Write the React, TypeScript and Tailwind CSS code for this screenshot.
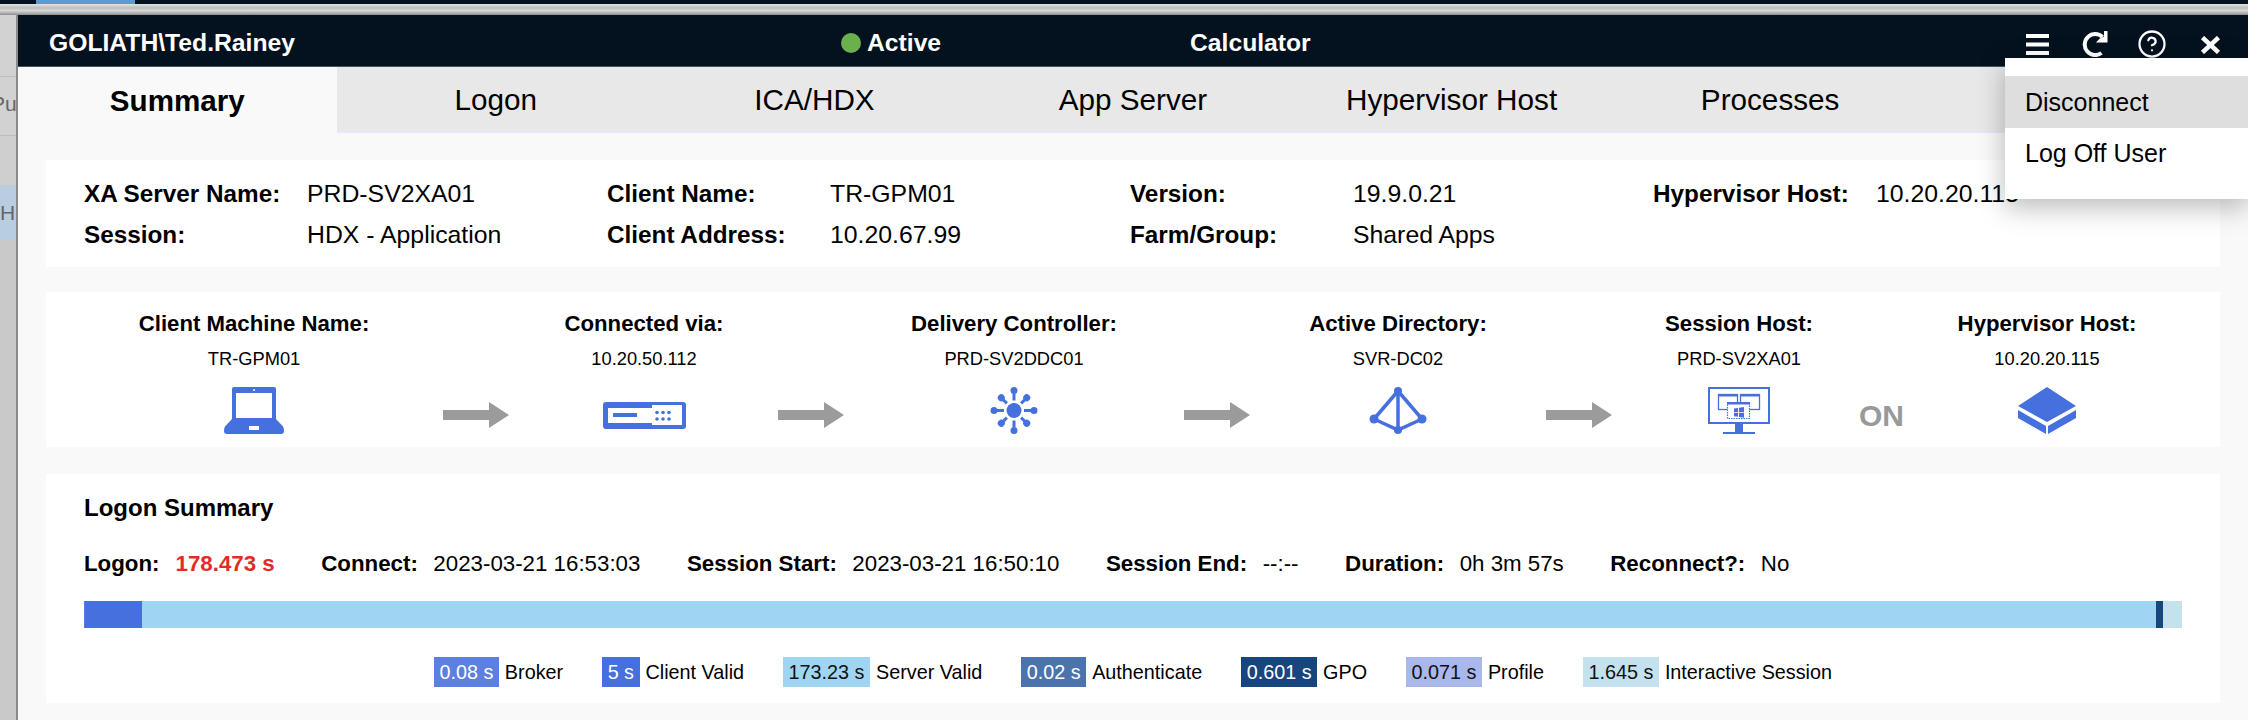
import { CircleHelp } from "lucide-react";

const BLUE = "#4670dd";

function LaptopIcon() {
  return (
    <svg width="60" height="47" viewBox="0 0 60 47" aria-hidden>
      <path
        fill={BLUE}
        fillRule="evenodd"
        d="M10 0h40a2 2 0 0 1 2 2v30l7 7.500q1 1.500 1 4.500a3 3 0 0 1-3 3H3a3 3 0 0 1-3-3q0-3 1-4.500L8 32V2a2 2 0 0 1 2-2zM12 6v25h36V6zM25 39v4h10v-4z"
      />
      <circle cx="30" cy="3" r="1" fill="#fff" />
    </svg>
  );
}

function RouterIcon() {
  const dots = [
    [54, 10.500],
    [60, 10.500],
    [66, 10.500],
    [54, 17],
    [60, 17],
    [66, 17],
  ];
  return (
    <svg className="mt-[15px]" width="83" height="27" viewBox="0 0 83 27" aria-hidden>
      <path
        fill={BLUE}
        fillRule="evenodd"
        d="M3 0h77a3 3 0 0 1 3 3v21a3 3 0 0 1-3 3H3a3 3 0 0 1-3-3V3a3 3 0 0 1 3-3zM5 6v15h44v2h30V3H49v3z"
      />
      <rect x="10" y="11" width="24" height="4" fill={BLUE} />
      {dots.map(([cx, cy]) => (
        <circle key={`${cx}-${cy}`} cx={cx} cy={cy} r="1.800" fill={BLUE} />
      ))}
    </svg>
  );
}

function HubIcon() {
  const spokes = [0, 45, 90, 135, 180, 225, 270, 315];
  return (
    <svg width="48" height="47" viewBox="-24 -23.500 48 47" aria-hidden>
      <circle r="7.500" fill={BLUE} />
      {spokes.map((a) => (
        <g key={a} transform={`rotate(${a})`} fill={BLUE}>
          <rect x="-1.500" y="-17" width="3" height="7" />
          <circle cy={a % 90 === 0 ? -20 : -18} r="3.500" />
        </g>
      ))}
    </svg>
  );
}

function DirectoryIcon() {
  return (
    <svg width="60" height="47" viewBox="0 0 60 47" aria-hidden>
      <g stroke={BLUE} strokeWidth="3.500" fill="none">
        <path d="M30 4 6 32 30 43 54 32zM30 4v39" />
      </g>
      <g fill={BLUE}>
        <circle cx="30" cy="4" r="4" />
        <circle cx="6" cy="32" r="4.500" />
        <circle cx="54" cy="32" r="4.500" />
        <circle cx="30" cy="43" r="4" />
      </g>
    </svg>
  );
}

function SessionHostIcon() {
  return (
    <svg width="62" height="47" viewBox="0 0 62 47" aria-hidden>
      <rect x="1" y="1" width="60" height="35" fill="none" stroke={BLUE} strokeWidth="2" />
      <rect x="27" y="37" width="8" height="8" fill={BLUE} />
      <rect x="15" y="45" width="32" height="2" fill={BLUE} />
      <g fill="none" stroke={BLUE} strokeWidth="1.300">
        <rect x="10.500" y="7.500" width="19" height="15" />
        <rect x="32.500" y="7.500" width="19" height="15" />
      </g>
      <rect x="10" y="7" width="20" height="2.500" fill={BLUE} />
      <rect x="32" y="7" width="20" height="2.500" fill={BLUE} />
      <rect x="19.500" y="15.500" width="22" height="16" fill="#fff" stroke={BLUE} strokeWidth="1.200" strokeDasharray="1.500 1" />
      <rect x="19" y="15" width="23" height="2.500" fill={BLUE} />
      <path fill={BLUE} d="M26 21.500l4-.6v4h-4zM31 20.800l5-.8v5h-5zM26 25.800h4v4l-4-.6zM31 25.800h5v5l-5-.8z" />
    </svg>
  );
}

function CubeIcon() {
  return (
    <svg width="58" height="47" viewBox="0 0 58 47" aria-hidden>
      <path
        fill={BLUE}
        d="M29 0 58 19 29 35 0 19zM0 23 28 39V47L0 31zM58 23 30 39V47L58 31z"
      />
    </svg>
  );
}

function Arrow({ className }: { className: string }) {
  return (
    <svg className={className} width="66" height="26" viewBox="0 0 66 26" aria-hidden>
      <path fill="#9b9b9b" d="M0 8h46V0l20 13-20 13v-8H0z" />
    </svg>
  );
}

function FlowNode({
  label,
  value,
  width,
  children,
}: {
  label: string;
  value: string;
  width: string;
  children: React.ReactNode;
}) {
  return (
    <div className={`${width} shrink-0 flex flex-col items-center`}>
      <div className="text-[22.200px] leading-[26px] font-bold text-black">{label}</div>
      <div className="mt-[10px] text-[18.300px] leading-6 text-black">{value}</div>
      <div className="mt-[16px] h-[47px] flex items-start justify-center">{children}</div>
    </div>
  );
}

const tabs = ["Summary", "Logon", "ICA/HDX", "App Server", "Hypervisor Host", "Processes", ""];

const info = [
  ["XA Server Name:", "PRD-SV2XA01"],
  ["Client Name:", "TR-GPM01"],
  ["Version:", "19.9.0.21"],
  ["Hypervisor Host:", "10.20.20.115"],
  ["Session:", "HDX - Application"],
  ["Client Address:", "10.20.67.99"],
  ["Farm/Group:", "Shared Apps"],
];

const stats = [
  ["Connect:", "2023-03-21 16:53:03"],
  ["Session Start:", "2023-03-21 16:50:10"],
  ["Session End:", "--:--"],
  ["Duration:", "0h 3m 57s"],
  ["Reconnect?:", "No"],
];

const legend = [
  { time: "0.08 s", label: "Broker", cls: "bg-[#5b80e0] text-white" },
  { time: "5 s", label: "Client Valid", cls: "bg-[#4670dd] text-white" },
  { time: "173.23 s", label: "Server Valid", cls: "bg-[#9fd5f3] text-[#111]" },
  { time: "0.02 s", label: "Authenticate", cls: "bg-[#4b74ad] text-white" },
  { time: "0.601 s", label: "GPO", cls: "bg-[#17467f] text-white" },
  { time: "0.071 s", label: "Profile", cls: "bg-[#a9b7ea] text-[#111]" },
  { time: "1.645 s", label: "Interactive Session", cls: "bg-[#c4e1ee] text-[#111]" },
];

export default function App() {
  return (
    <div className="relative w-[2248px] h-[720px] overflow-hidden bg-[#c9c9c9] font-['Liberation_Sans',Arial,sans-serif] text-black">
      {/* page behind the dialog */}
      <div className="h-1 bg-[#04121f] pl-9">
        <div className="h-1 w-[99px] bg-[#5b9bd5]" />
      </div>
      <div className="h-[11px] bg-[linear-gradient(#e4e4e4,#bdbdbd_35%,#d8d8d8_60%,#8e8e8e)]" />

      <div className="flex h-[705px]">
        <div className="w-4 shrink-0 overflow-hidden text-[21px] text-[#666]">
          <div className="h-[62px] bg-[#d2d2d2] border-b border-[#bdbdbd]" />
          <div className="h-[59px] bg-[#d2d2d2] border-b border-[#bdbdbd] leading-[53px] whitespace-nowrap -ml-[9px]">Pu</div>
          <div className="h-[49px] bg-[#cfcfcf]" />
          <div className="h-[55px] bg-[#b9cde0] leading-[55px]">H</div>
          <div className="h-[480px] bg-[#c9c9c9]" />
        </div>

        {/* dialog */}
        <div className="flex-1 flex flex-col border-l-2 border-[#8a8a8a] bg-[#f9f9f9]">
          <div className="h-[52px] shrink-0 flex items-center bg-[#04121f] border-b border-[#46525e] pl-[31px] pt-[5px] text-white text-[24.700px] font-bold">
            <div className="w-[792px]">GOLIATH\Ted.Rainey</div>
            <div className="w-[349px] flex items-center gap-[6px]">
              <span className="w-5 h-5 rounded-full bg-[#6ab04c]" />
              Active
            </div>
            <div>Calculator</div>
          </div>

          <div className="h-[66px] shrink-0 grid grid-cols-7">
            {tabs.map((tab, i) => (
              <div
                key={i}
                className={
                  i === 0
                    ? "flex items-center justify-center pt-[3px] text-[29.600px] font-bold"
                    : "flex items-center justify-center pt-[3px] text-[29.700px] bg-[#e8e8e8] border-b-2 border-[#e6e8f8]"
                }
              >
                {tab}
              </div>
            ))}
          </div>

          <div className="flex flex-col px-7">
            <div className="mt-[27px] h-[107px] bg-white pl-[38px] pr-[44px] pt-[17px] grid grid-cols-4 gap-y-[7px] auto-rows-[34px] text-[24.800px] leading-[34px]">
              {info.map(([label, value]) => (
                <div key={label} className="flex whitespace-nowrap">
                  <div className="w-[223px] shrink-0 font-bold text-[24.300px]">{label}</div>
                  <div>{value}</div>
                </div>
              ))}
            </div>

            <div className="mt-[25px] h-[155px] bg-white pl-[68px] pt-[19px] flex items-end pb-[13px]">
              <FlowNode label="Client Machine Name:" value="TR-GPM01" width="w-[280px]">
                <LaptopIcon />
              </FlowNode>
              <Arrow className="ml-[49px] mr-[35px] mb-[6px] shrink-0" />
              <FlowNode label="Connected via:" value="10.20.50.112" width="w-[200px]">
                <RouterIcon />
              </FlowNode>
              <Arrow className="ml-[34px] mr-[20px] mb-[6px] shrink-0" />
              <FlowNode label="Delivery Controller:" value="PRD-SV2DDC01" width="w-[300px]">
                <HubIcon />
              </FlowNode>
              <Arrow className="ml-[20px] mr-[18px] mb-[6px] shrink-0" />
              <FlowNode label="Active Directory:" value="SVR-DC02" width="w-[260px]">
                <DirectoryIcon />
              </FlowNode>
              <Arrow className="ml-[18px] mr-[17px] mb-[6px] shrink-0" />
              <FlowNode label="Session Host:" value="PRD-SV2XA01" width="w-[220px]">
                <SessionHostIcon />
              </FlowNode>
              <div className="ml-[10px] mr-[13px] mb-[1px] text-[30px] leading-[34px] font-bold text-[#999]">ON</div>
              <FlowNode label="Hypervisor Host:" value="10.20.20.115" width="w-[260px]">
                <CubeIcon />
              </FlowNode>
            </div>

            <div className="mt-[27px] h-[229px] bg-white px-[38px] pt-5">
              <div className="text-[24px] leading-7 font-bold">Logon Summary</div>
              <div className="mt-[28px] flex gap-[46.500px] text-[22.300px] leading-7 whitespace-nowrap">
                <div className="flex gap-[16px]">
                  <span className="font-bold">Logon:</span>
                  <span className="font-bold text-[#e02b27]">178.473 s</span>
                </div>
                {stats.map(([label, value]) => (
                  <div key={label} className="flex gap-[15.500px]">
                    <span className="font-bold">{label}</span>
                    <span>{value}</span>
                  </div>
                ))}
              </div>
              <div className="mt-[23px] h-[27px] flex">
                <div className="w-[1px] bg-[#5b80e0]" />
                <div className="w-[57px] bg-[#4670dd]" />
                <div className="flex-1 bg-[#9fd5f3]" />
                <div className="w-[7px] bg-[#17467f]" />
                <div className="w-[19px] bg-[#c4e1ee]" />
              </div>
              <div className="mt-[29px] flex justify-center gap-[39px] text-[19.800px] leading-[30px] whitespace-nowrap">
                {legend.map((item) => (
                  <div key={item.label} className="flex gap-[6px]">
                    <span className={`px-[5.500px] ${item.cls}`}>{item.time}</span>
                    <span>{item.label}</span>
                  </div>
                ))}
              </div>
            </div>
          </div>
        </div>
      </div>

      {/* toolbar icons and open menu sit over the dialog */}
      <div className="absolute left-[2026px] top-[31px] flex items-start text-white">
        <svg className="mt-[3px]" width="23" height="21" viewBox="0 0 23 21" aria-hidden>
          <path fill="#fff" d="M0 0h23v4H0zM0 8.500h23v4H0zM0 17h23v4H0z" />
        </svg>
        <svg className="ml-[33px]" width="26" height="26" viewBox="0 0 26 26" fill="none" aria-hidden>
          <path d="M20.500 6A10.500 10.500 0 1 0 19.500 22" stroke="#fff" strokeWidth="4" />
          <path d="M25.500 0v11.500H14l3.500-3.700 4.500-2.300V0z" fill="#fff" />
        </svg>
        <CircleHelp className="ml-[29px] -mt-[2px]" size={30} strokeWidth={1.800} color="#fff" />
        <svg className="ml-[33px] mt-[5px]" width="21" height="18" viewBox="0 0 21 18" aria-hidden>
          <path d="M2.500 1.500 18.500 16.500M18.500 1.500 2.500 16.500" stroke="#fff" strokeWidth="4.500" />
        </svg>
      </div>

      <div className="absolute left-[2005px] top-[58px] w-[243px] h-[141px] bg-white shadow-[0_8px_26px_rgba(0,0,0,0.28)] pt-[18px] text-[25px]">
        <div className="h-[52px] bg-[#dedede] pl-5 leading-[52px]">Disconnect</div>
        <div className="h-[52px] pl-5 leading-[50px]">Log Off User</div>
      </div>
    </div>
  );
}
